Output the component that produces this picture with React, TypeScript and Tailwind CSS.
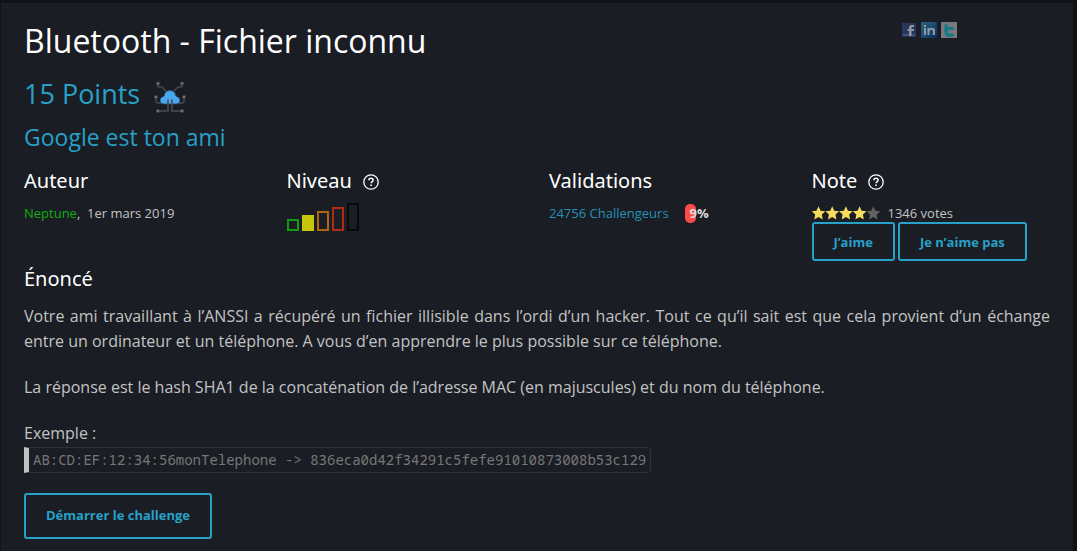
import React from "react";

const OUTLINE_BUTTON =
  "cursor-pointer rounded-[3px] border-2 border-[#27a1c8] px-5 text-[13px] font-bold text-[#27a1c8] hover:bg-[#27a1c8]/10";

const SECTION_TITLE = "font-['Noto_Sans',sans-serif] text-[20px] leading-7 text-white";

const LEVELS = [
  "h-3 border-[#0f9d0f]",
  "h-4 border-[#c6c60b] bg-[#c6c60b]",
  "h-5 border-[#b0650f]",
  "h-6 border-[#b22a12]",
  "h-7 border-[#08090b]",
];

function HelpIcon() {
  return (
    <svg viewBox="0 0 16 16" className="size-4" fill="none" stroke="#fff" aria-hidden="true">
      <circle cx="8" cy="8" r="7.2" strokeWidth="1.3" />
      <path d="M5.9 6.3c0-1.3.9-2 2.1-2s2.1.8 2.1 1.9c0 1.5-1.9 1.5-1.9 3.1" strokeWidth="1.5" />
      <path d="M8.1 10.5v1.6" strokeWidth="1.6" />
    </svg>
  );
}

function CloudNetworkIcon() {
  return (
    <svg viewBox="0 0 32 32" className="mt-1.5 size-8" fill="none" role="img" aria-label="Réseau">
      <path
        d="M4 2.5v3.3h4l4 4.2M28 2.5v3.3h-4L20 10M2 16.5v3.5q0 2 2 2h3M30 16.5v3.5q0 2-2 2h-3"
        stroke="#4b4d55"
        strokeWidth="1.3"
      />
      <path
        d="M9.8 23a3.7 3.7 0 0 1-.9-7.3c.9-.2 1.2-.4 1.4-1.4a5.8 5.8 0 0 1 11.4 0c.2 1 .5 1.2 1.4 1.4a3.7 3.7 0 0 1-.9 7.3z"
        fill="#46a9ef"
        stroke="#34475c"
        strokeWidth=".8"
      />
      <path d="M14 18.5V30H4M18 18.5V30h10" stroke="#4b4d55" strokeWidth="1.6" />
      <g fill="#817b60" stroke="#44454a" strokeWidth="1">
        <circle cx="4" cy="2.5" r="1.6" />
        <circle cx="28" cy="2.5" r="1.6" />
        <circle cx="2" cy="16" r="1.6" />
        <circle cx="30" cy="16" r="1.6" />
        <circle cx="4" cy="30" r="1.6" />
        <circle cx="28" cy="30" r="1.6" />
      </g>
    </svg>
  );
}

function Stars() {
  return (
    <svg viewBox="0 0 68 14" className="h-[14px] w-[68px]" role="img" aria-label="4 étoiles sur 5">
      {[0, 1, 2, 3, 4].map((i) => (
        <path
          key={i}
          transform={`translate(${i * 13.7} 0)`}
          d="M6.5.3 8.5 4.7l4.8.6-3.5 3.3.9 4.8-4.2-2.4-4.2 2.4.9-4.8L-.3 5.3l4.8-.6z"
          fill={i < 4 ? "#f6dc5c" : "#626262"}
        />
      ))}
    </svg>
  );
}

function SocialLinks() {
  return (
    <nav aria-label="Partager" className="mt-[19px] mr-[93px] flex h-4 items-center gap-1">
      <a href="#facebook" aria-label="Facebook">
        <svg viewBox="0 0 16 16" className="size-4">
          <rect x="1" y="1" width="14" height="14" fill="#29365b" />
          <rect x="2" y="12" width="12" height="2" fill="#43507a" />
          <path d="M8 14V9H6.5V7H8V5.5Q8 3 10.5 3H13v2h-1.700q-.8 0-.8.8V7H13v2h-2.500v5z" fill="#92959d" />
        </svg>
      </a>
      <a href="#linkedin" aria-label="LinkedIn">
        <svg viewBox="0 0 16 16" className="size-4">
          <defs>
            <linearGradient id="in-bg" x1="0" y1="0" x2="1" y2="1">
              <stop offset="0" stopColor="#31627c" />
              <stop offset=".5" stopColor="#174b73" />
              <stop offset="1" stopColor="#0b2b61" />
            </linearGradient>
          </defs>
          <rect width="16" height="16" rx="1" fill="url(#in-bg)" />
          <path
            d="M3 3h2v2H3zM3 6h2v7H3zM6.500 6h2v1q.9-1.200 2.600-1.200Q14 5.800 14 8.700V13h-2.200V9q0-1.300-1.500-1.300-1.800 0-1.800 1.800V13h-2z"
            fill="#91989f"
          />
        </svg>
      </a>
      <a href="#twitter" aria-label="Twitter">
        <svg viewBox="0 0 16 16" className="size-4">
          <rect width="16" height="16" fill="#77797d" />
          <path
            d="M5 3.500v6.500q0 3.200 3 3.200h3.500M5 6.500h6.500"
            fill="none"
            stroke="#147a88"
            strokeWidth="3.200"
            strokeLinecap="round"
            strokeLinejoin="round"
          />
        </svg>
      </a>
    </nav>
  );
}

function Column({ title, help, children }: { title: string; help?: boolean; children: React.ReactNode }) {
  return (
    <section className="min-w-0">
      <h4 className={`flex h-7 items-center gap-[11px] ${SECTION_TITLE}`}>
        {title}
        {help && (
          <button type="button" aria-label={`Aide : ${title}`} className="mt-0.5 cursor-pointer">
            <HelpIcon />
          </button>
        )}
      </h4>
      {children}
    </section>
  );
}

export default function App() {
  return (
    <div className="min-h-screen bg-[#111216] pt-[3px] pr-1 pl-px font-['Open_Sans',sans-serif] text-[#c3c3c3]">
      <main className="min-h-[calc(100vh-3px)] bg-[#1a1d24] px-[23px] pb-3">
        <header className="flex items-start justify-between">
          <h1 className="pt-3.5 text-[32px] leading-12 text-white">
            Bluetooth - Fichier inconnu
          </h1>
          <SocialLinks />
        </header>
        <h2 className="mt-[7px] flex h-11 items-center gap-3.5 text-[27px] text-[#27a1c8]">
          15 Points
          <CloudNetworkIcon />
        </h2>
        <h3 className="mt-[3px] text-[23px] leading-9 text-[#27a1c8]">Google est ton ami</h3>

        <div className="-mr-6 mt-3 grid grid-cols-4 text-[13px] leading-5">
          <Column title="Auteur">
            <p className="mt-2">
              <a href="#neptune" className="text-[#0fb00f]">Neptune</a>,&nbsp; 1er mars 2019
            </p>
          </Column>
          <Column title="Niveau" help>
            <div className="mt-2 flex h-7 items-end gap-[3px]" role="img" aria-label="Facile">
              {LEVELS.map((level) => (
                <span key={level} className={`w-3 border-2 ${level}`} />
              ))}
            </div>
          </Column>
          <Column title="Validations">
            <p className="mt-2 flex items-center gap-4">
              <a href="#challengeurs" className="text-[#2590b4]">24756 Challengeurs</a>
              <span className="w-[11px] rounded-[5px] bg-[#ff4a4a] pl-[5px] text-[13px] leading-[19px] font-bold whitespace-nowrap text-[#dcdcdc]">
                9%
              </span>
            </p>
          </Column>
          <Column title="Note" help>
            <p className="mt-2 flex h-[19px] items-center gap-2">
              <Stars />
              <span>1346 votes</span>
            </p>
            <div className="flex gap-[3px]">
              <button type="button" className={`h-[39px] ${OUTLINE_BUTTON}`}>J’aime</button>
              <button type="button" className={`h-[39px] ${OUTLINE_BUTTON}`}>Je n’aime pas</button>
            </div>
          </Column>
        </div>

        <section className="text-[16px] leading-[25px]">
          <h4 className={`mt-1 ${SECTION_TITLE}`}>Énoncé</h4>
          <p className="mt-[11px] text-justify">
            Votre ami travaillant à l’ANSSI a récupéré un fichier illisible dans l’ordi d’un hacker. Tout ce qu’il
            sait est que cela provient d’un échange entre un ordinateur et un téléphone. A vous d’en apprendre le
            plus possible sur ce téléphone.
          </p>
          <p className="mt-[21px]">
            La réponse est le hash SHA1 de la concaténation de l’adresse MAC (en majuscules) et du nom du téléphone.
          </p>
          <p className="mt-[21px]">Exemple :</p>
          <code className="mt-px block w-fit rounded-r-sm border border-l-[5px] border-[#303237] border-l-[#c0c0c0] px-1 font-['Noto_Sans_Mono','DejaVu_Sans_Mono',monospace] text-[14px] leading-6 text-[#777]">
            {"AB:CD:EF:12:34:56monTelephone -> 836eca0d42f34291c5fefe91010873008b53c129"}
          </code>
        </section>

        <button type="button" className={`mt-5 h-[46px] ${OUTLINE_BUTTON}`}>Démarrer le challenge</button>
      </main>
    </div>
  );
}
